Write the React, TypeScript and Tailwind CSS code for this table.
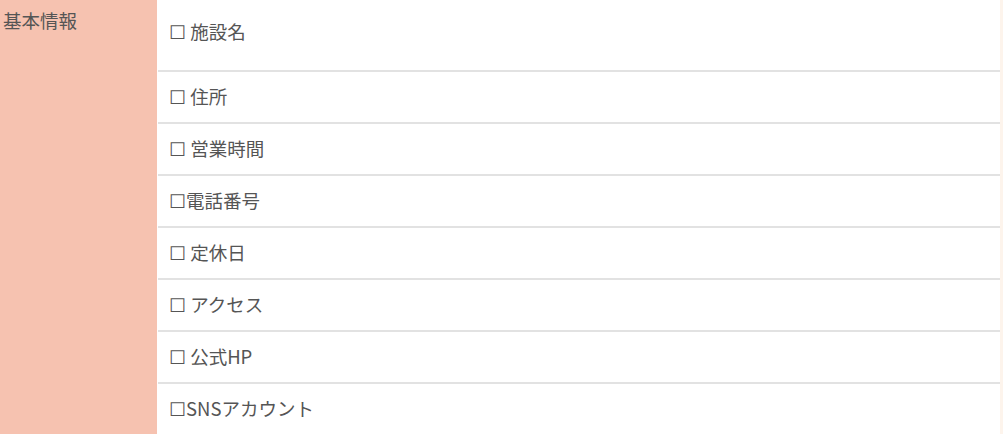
const items = ['☐ 施設名', '☐ 住所', '☐ 営業時間', '☐電話番号', '☐ 定休日', '☐ アクセス', '☐ 公式HP', '☐SNSアカウント'];

export default function App() {
  return (
    <div
      className="flex w-[1003px] h-[434px] overflow-hidden bg-white text-[#555] text-[18.5px]"
      style={{ fontFamily: '"Noto Sans CJK JP", "Noto Sans", sans-serif' }}
    >
      <div className="w-[157px] shrink-0 bg-[#f6c2b0] pl-[3px] pt-[6px] leading-[28px]">基本情報</div>
      <div className="flex-1 pl-[1px]">
        {items.map((label, i) => (
          <div
            key={label}
            className={`flex items-center border-b-2 border-[#e2e2e2] pl-[11px] ${i === 0 ? 'h-[72px] pb-[6px]' : 'h-[52px]'}`}
          >
            {label}
          </div>
        ))}
      </div>
      <div className="w-[3px] shrink-0 bg-[#fdf4ec]" />
    </div>
  );
}
